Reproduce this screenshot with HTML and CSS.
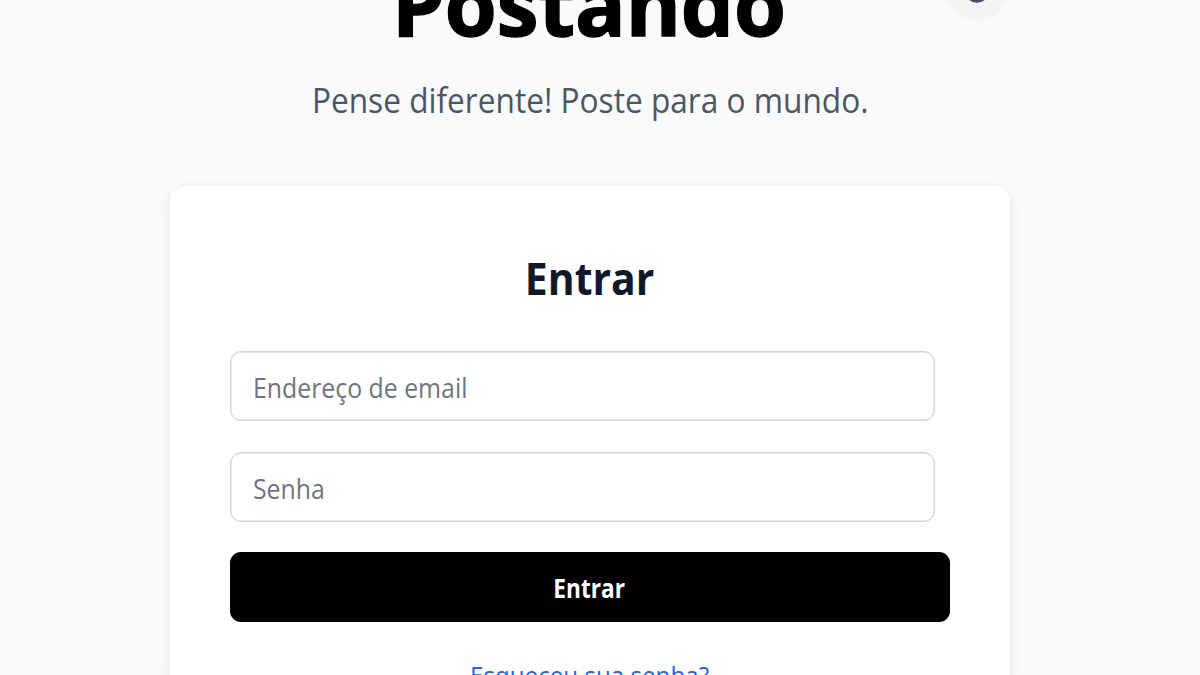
FILE: index.html
```html
<!DOCTYPE html>
<html lang="pt-BR">
<head>
<meta charset="utf-8">
<title>Postando</title>
<link rel="stylesheet" href="styles.css">
</head>
<body>
<main class="page">
<button class="theme" type="button" aria-label="Tema"><svg viewBox="0 0 24 24" width="34" height="34"><path d="M21 12.8A9 9 0 1 1 11.2 3 7 7 0 0 0 21 12.8z" fill="#4b5060"/></svg></button>
<header class="hero">
<h1 class="brand"><span class="fit">Postando</span></h1>
<p class="tagline"><span class="fit">Pense diferente! Poste para o mundo.</span></p>
</header>
<form class="card">
<h2 class="title"><span class="fit">Entrar</span></h2>
<label class="field"><input class="control" type="email" placeholder="Endereço de email"></label>
<label class="field"><input class="control" type="password" placeholder="Senha"></label>
<button class="submit" type="button"><span class="fit">Entrar</span></button>
<a class="forgot"><span class="fit">Esqueceu sua senha?</span></a>
</form>
</main>
</body>
</html>
```
FILE: styles.css
```css
* { box-sizing: border-box; }
body { margin: 0; height: 675px; overflow: hidden; background: #f9fafc; font-family: "Segoe UI", "Open Sans", "Noto Sans", sans-serif; }
.page { position: relative; display: flex; flex-direction: column; width: 840px; height: 675px; margin-left: 170px; }
.theme { position: absolute; left: 775px; top: -43px; width: 64px; height: 64px; border: 0; border-radius: 50%; background: #f4f4f5; display: grid; place-items: center; padding: 1px 0 0; }
.hero { display: flow-root; flex: none; height: 186px; text-align: center; }
.fit { display: inline-block; transform: scaleX(.93); }
.brand { margin: -49px 0 0; font-size: 84px; line-height: 106px; font-weight: 700; color: #000; }
.brand .fit { transform: translateX(-1px); -webkit-text-stroke: 1.5px #000; }
.tagline { margin: 20px 0 0; font-size: 34px; line-height: 46px; color: #4b5563; white-space: nowrap; }
.card { flex: 1; min-height: 0; padding: 62px 60px 0; background: #fff; border-radius: 15px 15px 0 0; box-shadow: 0 4px 12px rgba(0,0,0,.1); display: flex; flex-direction: column; }
.card > * { flex-shrink: 0; }
.title { margin: 0 0 43px; font-size: 44px; line-height: 60px; font-weight: 700; text-align: center; color: #111827; }
.field { width: 705px; height: 70px; margin: 0 0 31px; padding: 3px 22px 0; border: 1px solid #d1d5db; border-radius: 11px; background: #fff; box-shadow: inset 0 0 0 .5px #d1d5db; display: flex; }
.field + .field { margin-bottom: 30px; }
.control { width: 100%; padding: 0; border: 0; outline: 0; background: transparent; transform: scaleX(.92); transform-origin: left; font: 400 27px "Segoe UI", "Open Sans", "Noto Sans", sans-serif; }
.control::placeholder { color: #70757d; opacity: 1; }
.submit { height: 70px; padding: 1px 0 0; border: 0; border-radius: 11px; background: #000; color: #fff; font: 700 26px "Segoe UI", "Open Sans", "Noto Sans", sans-serif; }
.submit .fit { transform: translateX(-1px) scaleX(.87); }
.forgot { margin-top: 35px; text-align: center; color: #2563eb; font-size: 26px; line-height: 36px; }
```
